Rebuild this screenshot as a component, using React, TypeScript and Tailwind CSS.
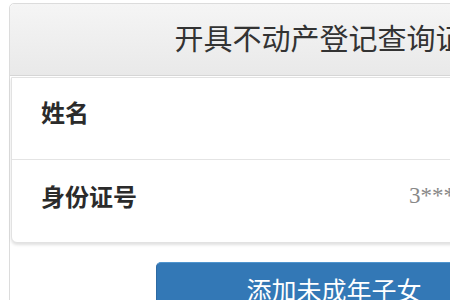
import React from "react";

const font = { fontFamily: '"Noto Sans CJK SC", "Liberation Sans", sans-serif' };

const App = () => {
    return (
        <div className="w-[450px] h-[300px] overflow-hidden bg-white" style={font}>
            <div className="ml-[9px] mt-[3px] w-[650px] h-[320px] border border-[#dcdcdc] rounded-[5px] bg-white">
                {/* header */}
                <div className="h-[72px] flex items-center justify-center rounded-t-[5px] border-b border-[#d6d6d6] bg-gradient-to-b from-[#f5f5f5] to-[#e9e9e9]">
                    <h1 className="text-[29px] leading-none text-[#333] whitespace-nowrap -mt-[4px]">开具不动产登记查询证明</h1>
                </div>

                {/* info card */}
                <div className="mx-[1px] mt-[1px] bg-white border border-[#e2e2e2] rounded-b-[6px] shadow-[0_2px_3px_rgba(0,0,0,0.12)]">
                    <div className="h-[82px] flex items-center pl-[29px] pb-[14px] border-b border-[#e4e4e4]">
                        <span className="text-[24px] font-bold text-[#2b2b2b]">姓名</span>
                    </div>
                    <div className="h-[82px] flex items-center pl-[29px] pb-[10px]">
                        <span className="w-[368px] text-[24px] font-bold text-[#2b2b2b] whitespace-nowrap">身份证号</span>
                        <span className="text-[23px] text-[#888] whitespace-nowrap" style={{ fontFamily: '"Liberation Serif", serif' }}>
                            3****************6
                        </span>
                    </div>
                </div>

                {/* button */}
                <div className="flex justify-center mt-[19px]">
                    <button
                        type="button"
                        className="w-[356px] h-[52px] rounded-[5px] bg-[#3378b6] border border-[#2d6aa3] border-t-[#4f95cf] text-white text-[25px] leading-none pt-[2px]"
                    >
                        添加未成年子女
                    </button>
                </div>
            </div>
        </div>
    );
};

export default App;
